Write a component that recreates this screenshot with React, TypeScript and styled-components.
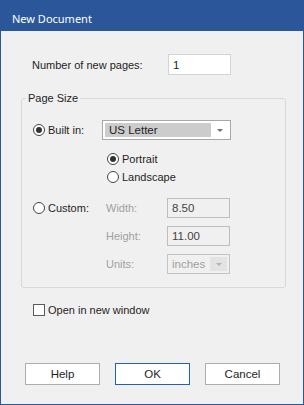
import React from "react";
import styled, { createGlobalStyle, css } from "styled-components";

const Global = createGlobalStyle`
  html, body { margin: 0; padding: 0; background: #f0f0f0; }
  * { box-sizing: border-box; }
`;

const BLUE = "#2b579a";

const Window = styled.div`
  width: 304px;
  height: 405px;
  display: flex;
  flex-direction: column;
  background: #f0f0f0;
  border: 1px solid ${BLUE};
  border-top: none;
  font-family: "Liberation Sans", Arial, sans-serif;
  font-size: 11px;
  color: #1e1e1e;
`;

const TitleBar = styled.div`
  height: 31px;
  margin: 0 -1px;
  background: ${BLUE};
  color: #fff;
  display: flex;
  align-items: center;
  padding-left: 12px;
  padding-top: 5px;
  font-family: "Noto Sans", "Open Sans", sans-serif;
  font-size: 11px;
`;

const FieldRow = styled.div`
  display: flex;
  align-items: center;
  margin-top: 23px;
  padding-left: 31px;
`;

const FieldLabel = styled.label<{ $width: number; $disabled?: boolean }>`
  width: ${(p) => p.$width}px;
  flex: none;
  color: ${(p) => (p.$disabled ? "#a0a0a0" : "#1e1e1e")};
`;

const TextBox = styled.div<{ $disabled?: boolean; $h?: number }>`
  width: 63px;
  height: ${(p) => p.$h ?? 20}px;
  display: flex;
  align-items: center;
  padding-left: 4px;
  border: 1px solid ${(p) => (p.$disabled ? "#bdbdbd" : "#d4d4d4")};
  background: ${(p) => (p.$disabled ? "#f0f0f0" : "#fff")};
  color: ${(p) => (p.$disabled ? "#444" : "#1e1e1e")};
  font-size: 11.5px;
`;

const Group = styled.fieldset`
  margin: 16px 0 0 20px;
  padding: 0 0 13px 0;
  width: 265px;
  min-width: 0;
  border: 1px solid #d9d9d9;
  border-radius: 3px;
`;

const Legend = styled.legend`
  margin-left: 4px;
  padding: 0 2px;
  line-height: 14px;
  font-size: 11px;
`;

const GroupGrid = styled.div`
  display: grid;
  grid-template-columns: 80px 1fr;
  align-items: center;
  margin-top: 15px;
`;

const Cell = styled.div<{ $pl?: number; $mt?: number; $h?: number }>`
  display: flex;
  align-items: center;
  padding-left: ${(p) => p.$pl ?? 0}px;
  margin-top: ${(p) => p.$mt ?? 0}px;
  ${(p) =>
    p.$h &&
    css`
      height: ${p.$h}px;
    `}
`;

const OptionLabel = styled.label`
  display: flex;
  align-items: center;
  gap: 3px;
  white-space: nowrap;
`;

const RadioCircle = styled.span<{ $checked?: boolean }>`
  width: 12px;
  height: 12px;
  flex: none;
  border-radius: 50%;
  border: 1px solid #444;
  background: #fff;
  display: flex;
  align-items: center;
  justify-content: center;
  &::after {
    content: "";
    width: 6px;
    height: 6px;
    border-radius: 50%;
    background: ${(p) => (p.$checked ? "#333" : "transparent")};
  }
`;

const CheckBox = styled.span`
  width: 12px;
  height: 12px;
  flex: none;
  border: 1px solid #5a5a5a;
  background: #fff;
`;

const Select = styled.div<{ $disabled?: boolean; $width: number }>`
  width: ${(p) => p.$width}px;
  height: 20px;
  display: flex;
  align-items: stretch;
  padding: 2px;
  border: 1px solid ${(p) => (p.$disabled ? "#c4c4c4" : "#a8a8a8")};
  background: ${(p) => (p.$disabled ? "#f0f0f0" : "#fff")};
  font-size: 11.5px;
`;

const SelectValue = styled.div<{ $disabled?: boolean; $highlight?: boolean }>`
  flex: 1;
  display: flex;
  align-items: center;
  padding-left: ${(p) => (p.$highlight ? 4 : 2)}px;
  background: ${(p) => (p.$highlight ? "#cccccc" : "transparent")};
  color: ${(p) => (p.$disabled ? "#a0a0a0" : "#1e1e1e")};
`;

const ArrowBox = styled.div<{ $disabled?: boolean }>`
  width: 17px;
  flex: none;
  display: flex;
  align-items: center;
  justify-content: center;
  background: ${(p) => (p.$disabled ? "#e3e3e3" : "transparent")};
  &::after {
    content: "";
    border-left: 3px solid transparent;
    border-right: 3px solid transparent;
    border-top: 3px solid ${(p) => (p.$disabled ? "#b4b4b4" : "#707070")};
  }
`;

const CheckRow = styled.div`
  display: flex;
  margin-top: 15px;
  padding-left: 32px;
  height: 14px;
  align-items: center;
`;

const ButtonRow = styled.div`
  display: flex;
  gap: 15px;
  margin-top: auto;
  margin-bottom: 19px;
  padding-left: 24px;
`;

const Button = styled.button<{ $primary?: boolean }>`
  width: 75px;
  height: 22px;
  padding: 0;
  border: 1px solid ${(p) => (p.$primary ? "#1f62b8" : "#adadad")};
  background: #fff;
  font-family: "Liberation Sans", Arial, sans-serif;
  font-size: 11.5px;
  color: #1e1e1e;
`;

export default function App() {
  return (
    <>
      <Global />
      <Window>
        <TitleBar>New Document</TitleBar>

        <FieldRow>
          <FieldLabel $width={136}>Number of new pages:</FieldLabel>
          <TextBox $h={21}>1</TextBox>
        </FieldRow>

        <Group>
          <Legend>Page Size</Legend>
          <GroupGrid>
            <Cell $pl={11}>
              <OptionLabel>
                <RadioCircle $checked />
                Built in:
              </OptionLabel>
            </Cell>
            <Cell>
              <Select $width={129}>
                <SelectValue $highlight>US Letter</SelectValue>
                <ArrowBox />
              </Select>
            </Cell>

            <span />
            <Cell $pl={5} $mt={10} $h={18}>
              <OptionLabel>
                <RadioCircle $checked />
                Portrait
              </OptionLabel>
            </Cell>
            <span />
            <Cell $pl={5} $h={18}>
              <OptionLabel>
                <RadioCircle />
                Landscape
              </OptionLabel>
            </Cell>

            <Cell $pl={11} $mt={12}>
              <OptionLabel>
                <RadioCircle />
                Custom:
              </OptionLabel>
            </Cell>
            <Cell $pl={4} $mt={12}>
              <FieldLabel $width={61} $disabled>
                Width:
              </FieldLabel>
              <TextBox $disabled>8.50</TextBox>
            </Cell>

            <span />
            <Cell $pl={4} $mt={8}>
              <FieldLabel $width={61} $disabled>
                Height:
              </FieldLabel>
              <TextBox $disabled>11.00</TextBox>
            </Cell>

            <span />
            <Cell $pl={4} $mt={8}>
              <FieldLabel $width={61} $disabled>
                Units:
              </FieldLabel>
              <Select $width={63} $disabled>
                <SelectValue $disabled>inches</SelectValue>
                <ArrowBox $disabled />
              </Select>
            </Cell>
          </GroupGrid>
        </Group>

        <CheckRow>
          <OptionLabel>
            <CheckBox />
            Open in new window
          </OptionLabel>
        </CheckRow>

        <ButtonRow>
          <Button>Help</Button>
          <Button $primary>OK</Button>
          <Button>Cancel</Button>
        </ButtonRow>
      </Window>
    </>
  );
}
